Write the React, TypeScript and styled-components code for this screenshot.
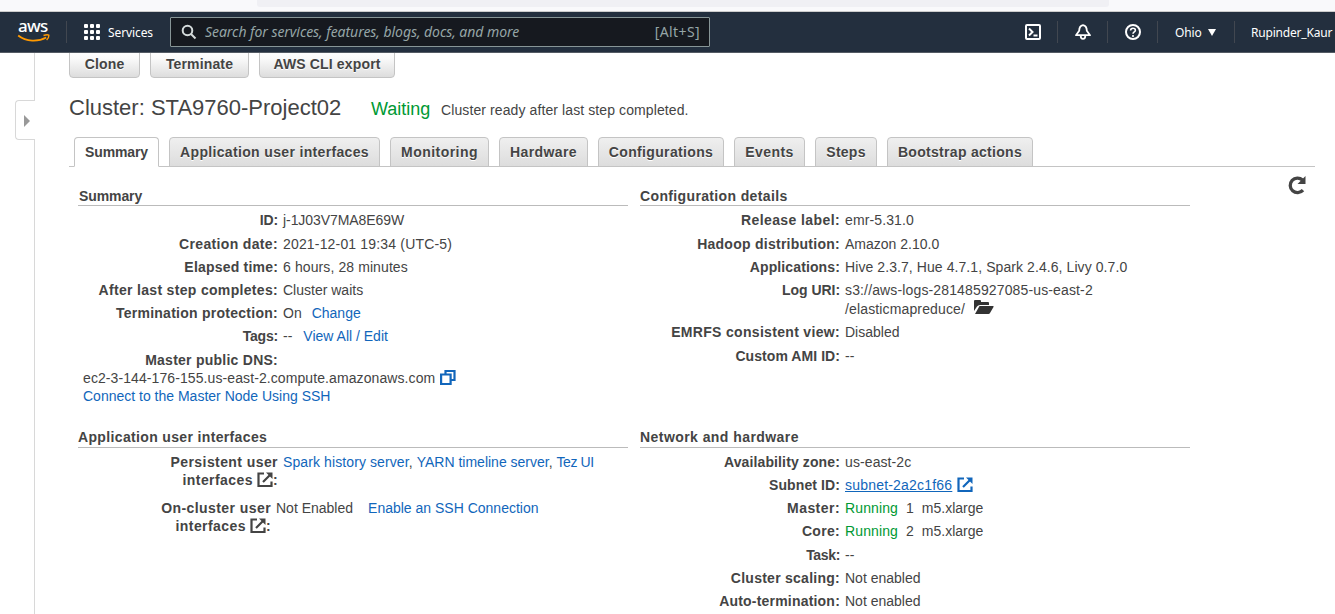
import React from "react";
import styled, { createGlobalStyle } from "styled-components";

const GlobalStyle = createGlobalStyle`
  * { box-sizing: border-box; }
  body { margin: 0; background: #fff; overflow: hidden; }
`;

const Page = styled.div`
  display: flex;
  flex-direction: column;
  width: 1335px;
  height: 614px;
  overflow: hidden;
  background: #fff;
  color: #444;
  font: 14px/18px "Liberation Sans", Arial, sans-serif;
`;

const BrowserStrip = styled.div`
  flex: none;
  height: 12px;
  background: #f9f9fb;
  border-bottom: 1px solid #cccccc;
  padding-left: 257px;
`;

const AddressBar = styled.div`
  width: 852px;
  height: 7px;
  border-radius: 0 0 3px 3px;
  background: #f0f0f4;
`;

const Nav = styled.header`
  flex: none;
  display: flex;
  align-items: center;
  height: 41px;
  background: #232f3e;
  border-bottom: 1px solid #545b64;
  color: #fff;
  font-family: "Noto Sans", sans-serif;
  font-size: 12px;
  white-space: nowrap;
`;

const Logo = styled.div`
  flex: none;
  display: flex;
  flex-direction: column;
  width: 34px;
  margin-left: 17px;
  padding-bottom: 4px;
`;

const LogoText = styled.span`
  height: 17px;
  padding-left: 1px;
  font-size: 17px;
  font-weight: 500;
  line-height: 18px;
  letter-spacing: -0.7px;
`;

const Smile = styled.svg`
  width: 34px;
  height: 9px;
`;

const Divider = styled.span<{ $left: number; $right: number }>`
  flex: none;
  width: 1px;
  height: 22px;
  margin-left: ${(p) => p.$left}px;
  margin-right: ${(p) => p.$right}px;
  background: #414750;
`;

const ServicesGrid = styled.div`
  flex: none;
  display: grid;
  grid-template-columns: repeat(3, 4px);
  grid-auto-rows: 4px;
  gap: 2px;
  span { background: #fff; border-radius: 1px; }
`;

const NavText = styled.span<{ $left: number; $width: number; $spacing?: number }>`
  flex: none;
  margin-left: ${(p) => p.$left}px;
  padding-top: 2px;
  width: ${(p) => p.$width}px;
  letter-spacing: ${(p) => p.$spacing ?? 0}px;
`;

const Search = styled.div`
  flex: none;
  display: flex;
  align-items: center;
  width: 540px;
  height: 30px;
  margin-left: 17px;
  padding: 0 9px 0 10px;
  border: 1px solid #879596;
  border-radius: 1px;
  background: #16191f;
  color: #95a5a6;
  font-size: 14px;
`;

const Placeholder = styled.em`
  flex: 1;
  margin-left: 8px;
  letter-spacing: -0.05px;
`;

const Shortcut = styled.span`
  letter-spacing: 0.4px;
`;

const NavIcon = styled.svg<{ $left?: number }>`
  flex: none;
  width: 16px;
  height: 16px;
  margin-left: ${(p) => p.$left ?? 0}px;
`;

const Caret = styled.span`
  flex: none;
  border: 4px solid transparent;
  border-top: 7px solid #fff;
  border-bottom: 0;
`;

const Body = styled.div`
  flex: 1;
  display: flex;
  min-height: 0;
`;

const Rail = styled.aside`
  flex: none;
  width: 35px;
  display: flex;
  flex-direction: column;
  align-items: flex-end;
`;

const RailLine = styled.div<{ $height?: number }>`
  width: 1px;
  background: #d8d8d8;
  ${(p) => (p.$height ? `flex: none; height: ${p.$height}px;` : "flex: 1;")}
`;

const Handle = styled.div`
  flex: none;
  width: 20px;
  height: 40px;
  display: flex;
  align-items: center;
  padding: 1px 0 0 8px;
  border: 1px solid #d8d8d8;
  border-right: 0;
  border-radius: 4px 0 0 4px;
`;

const HandleArrow = styled.span`
  border: 6px solid transparent;
  border-left: 6px solid #999;
  border-right: 0;
`;

const Main = styled.main`
  display: flex;
  flex-direction: column;
  width: 1246px;
  margin-left: 34px;
`;

const Actions = styled.div`
  flex: none;
  display: flex;
  gap: 10px;
  height: 25px;
  align-items: flex-end;
  overflow: hidden;
`;

const Button = styled.button<{ $width: number }>`
  flex: none;
  width: ${(p) => p.$width}px;
  height: 29px;
  padding: 0;
  border: 1px solid #c4c4c4;
  border-radius: 4px;
  background: linear-gradient(#fff, #fafafa 30%, #dddddd);
  color: #444;
  font: bold 14px/26px "Liberation Sans", Arial, sans-serif;
  letter-spacing: 0.15px;
  text-shadow: 0 1px #fff;
`;

const TitleRow = styled.div`
  flex: none;
  display: flex;
  align-items: baseline;
  height: 59px;
  padding-top: 18px;
  white-space: nowrap;
`;

const Title = styled.h1`
  margin: 0;
  width: 302px;
  font-size: 22px;
  line-height: 24px;
  font-weight: normal;
`;

const State = styled.span`
  width: 70px;
  color: #093;
  font-size: 18px;
`;

const Spaced = styled.span<{ $by: number }>`
  letter-spacing: ${(p) => p.$by}px;
`;

const Tabs = styled.div`
  flex: none;
  display: flex;
  gap: 10px;
  height: 30px;
  padding-left: 5px;
  border-bottom: 1px solid #c4c4c4;
`;

const Tab = styled.div<{ $width: number; $spacing: number; $active?: boolean }>`
  flex: none;
  width: ${(p) => p.$width}px;
  height: 30px;
  border: 1px solid #c4c4c4;
  border-bottom-color: ${(p) => (p.$active ? "#fff" : "#c4c4c4")};
  border-radius: 4px 4px 0 0;
  background: ${(p) => (p.$active ? "#fff" : "linear-gradient(#efefef, #dddddd)")};
  font-weight: bold;
  line-height: 28px;
  letter-spacing: ${(p) => p.$spacing}px;
  text-align: center;
  text-shadow: 0 1px #fff;
  white-space: nowrap;
`;

const Content = styled.div`
  flex: 1;
  display: flex;
  padding: 20px 0 0 9px;
`;

const Column = styled.div`
  flex: none;
  width: 550px;
  margin-right: 12px;
`;

const Section = styled.section<{ $height?: number }>`
  height: ${(p) => (p.$height ? `${p.$height}px` : "auto")};
`;

const SectionTitle = styled.h2<{ $indent?: number; $height?: number; $gap?: number; $spacing?: number }>`
  margin: 0 0 ${(p) => p.$gap ?? 5.4}px;
  height: ${(p) => p.$height ?? 19}px;
  padding-left: ${(p) => p.$indent ?? 0}px;
  border-bottom: 1px solid #bbb;
  font-size: 14px;
  line-height: 18px;
  letter-spacing: ${(p) => p.$spacing ?? 0.36}px;
`;

const Row = styled.div<{ $gap?: number }>`
  display: flex;
  gap: 5px;
  margin-bottom: ${(p) => p.$gap ?? 5.2}px;
  white-space: nowrap;
`;

const Label = styled.div<{ $width?: number; $spacing?: number }>`
  flex: none;
  width: ${(p) => p.$width ?? 200}px;
  text-align: right;
  font-weight: bold;
  letter-spacing: ${(p) => p.$spacing ?? 0.2}px;
`;

const Value = styled.div<{ $line?: number; $spacing?: number }>`
  line-height: ${(p) => p.$line ?? 18}px;
  letter-spacing: ${(p) => p.$spacing ?? 0}px;
`;

const DnsValue = styled.div`
  padding-left: 5px;
  white-space: nowrap;
`;

const Link = styled.a<{ $left?: number; $underline?: boolean }>`
  margin-left: ${(p) => p.$left ?? 0}px;
  color: #1166bb;
  text-decoration: ${(p) => (p.$underline ? "underline" : "none")};
`;

const Running = styled.span`
  color: #093;
  margin-right: 8px;
  letter-spacing: 0.12px;
`;

const Count = styled.span`
  margin-right: 8px;
`;

const Glyph = styled.svg<{ $w: number; $h: number; $left?: number; $raise?: number }>`
  width: ${(p) => p.$w}px;
  height: ${(p) => p.$h}px;
  margin: -4px 0 -4px ${(p) => p.$left ?? 0}px;
  vertical-align: ${(p) => p.$raise ?? 1}px;
`;

const Refresh = styled.svg`
  flex: none;
  width: 20px;
  height: 20px;
  margin: -12px 0 0 85px;
`;

const External = ({ left = 5, raise = 1 }: { left?: number; raise?: number }) => (
  <Glyph $w={16} $h={16} $left={left} $raise={raise} viewBox="0 0 16 16" fill="none" stroke="currentColor" strokeWidth="2.200">
    <path d="M7 1.500H1.500V14H14.500V9.500M6 10 13 3" />
    <path d="M9 .5h6.500V7z" fill="currentColor" stroke="none" />
  </Glyph>
);

const tabs: [string, number, number][] = [
  ["Summary", 85, -0.1],
  ["Application user interfaces", 211, 0.34],
  ["Monitoring", 99, 0.45],
  ["Hardware", 89, 0.4],
  ["Configurations", 126, 0.35],
  ["Events", 71, 0.4],
  ["Steps", 62, 0.25],
  ["Bootstrap actions", 146, 0.3],
];

type FieldProps = { label: string; tracking?: number; spacing?: number; children: React.ReactNode };

const Field = ({ label, tracking, spacing, children }: FieldProps) => (
  <Row>
    <Label $spacing={tracking}>{label}:</Label>
    <Value $spacing={spacing}>{children}</Value>
  </Row>
);

export default function App() {
  return (
    <Page>
      <GlobalStyle />
      <BrowserStrip><AddressBar /></BrowserStrip>
      <Nav>
        <Logo>
          <LogoText>aws</LogoText>
          <Smile viewBox="0 0 34 9" fill="none" stroke="#f90">
            <path d="M1.200 1.500c8 6.500 20 6.500 28 2" strokeWidth="1.800" />
            <path d="M26.500 1.500c2.500-.9 4.500-.9 5.300-.4.2 1.800-.6 3.500-2.200 4.900" strokeWidth="1.400" />
          </Smile>
        </Logo>
        <Divider $left={15} $right={17} />
        <ServicesGrid>{Array.from({ length: 9 }, (_, i) => <span key={i} />)}</ServicesGrid>
        <NavText $left={8} $width={45} $spacing={-0.1}>Services</NavText>
        <Search>
          <NavIcon viewBox="0 0 16 16" fill="none" stroke="#d5dbdb" strokeWidth="2">
            <circle cx="6.500" cy="6.500" r="4.800" /><path d="m10 10 4.500 4.500" />
          </NavIcon>
          <Placeholder>Search for services, features, blogs, docs, and more</Placeholder>
          <Shortcut>[Alt+S]</Shortcut>
        </Search>
        <NavIcon $left={315} viewBox="0 0 16 16" fill="none" stroke="#fff" strokeWidth="2">
          <rect x="1" y="1" width="14" height="14" rx="1" /><path d="m4 4.500 3.500 3.500L4 11.500M8.500 11.500h4" />
        </NavIcon>
        <Divider $left={16} $right={17} />
        <NavIcon viewBox="0 0 16 16" fill="none" stroke="#fff" strokeWidth="1.800" strokeLinejoin="round">
          <path d="M8 1.200C5 1.800 4.200 4 4.200 6.800L1 11.200h14L11.800 6.800C11.800 4 11 1.800 8 1.200Z" />
          <path d="M5.700 11.500c0 4.600 4.600 4.600 4.600 0" />
        </NavIcon>
        <Divider $left={16} $right={17} />
        <NavIcon viewBox="0 0 16 16" fill="none" stroke="#fff" strokeWidth="2">
          <circle cx="8" cy="8" r="7" />
          <path d="M5.600 6.500C5.600 3.300 10.400 3.600 10.400 6.200 10.400 8 8 7.800 8 9.800M8 11v2" strokeWidth="1.600" />
        </NavIcon>
        <Divider $left={16} $right={17} />
        <NavText $left={0} $width={33} $spacing={-0.1}>Ohio</NavText>
        <Caret />
        <Divider $left={18} $right={17} />
        <NavText $left={-1} $width={84} $spacing={-0.2}>Rupinder_Kaur</NavText>
      </Nav>
      <Body>
        <Rail>
          <RailLine $height={47} />
          <Handle><HandleArrow /></Handle>
          <RailLine />
        </Rail>
        <Main>
          <Actions>
            <Button $width={71}>Clone</Button>
            <Button $width={99}>Terminate</Button>
            <Button $width={136}>AWS CLI export</Button>
          </Actions>
          <TitleRow>
            <Title>Cluster: STA9760-Project02</Title>
            <State>Waiting</State>
            <Spaced $by={0.1}>Cluster ready after last step completed.</Spaced>
          </TitleRow>
          <Tabs>
            {tabs.map(([name, width, spacing], i) => (
              <Tab key={name} $width={width} $spacing={spacing} $active={i === 0}>{name}</Tab>
            ))}
          </Tabs>
          <Content>
            <Column>
              <Section $height={241}>
                <SectionTitle $indent={1} $spacing={-0.1}>Summary</SectionTitle>
                <Field label="ID" tracking={-0.1} spacing={-0.07}>j-1J03V7MA8E69W</Field>
                <Field label="Creation date" tracking={0.34} spacing={0.17}>2021-12-01 19:34 (UTC-5)</Field>
                <Field label="Elapsed time" spacing={0.1}>6 hours, 28 minutes</Field>
                <Field label="After last step completes" tracking={0.32}>Cluster waits</Field>
                <Field label="Termination protection" tracking={0.26}>On<Link $left={10}>Change</Link></Field>
                <Field label="Tags" tracking={-0.2}>--<Link $left={11}>View All / Edit</Link></Field>
                <Row $gap={0}><Label $spacing={0.25}>Master public DNS:</Label></Row>
                <DnsValue>
                  <Spaced $by={0.09}>ec2-3-144-176-155.us-east-2.compute.amazonaws.com</Spaced>
                  <Glyph $w={16} $h={16} $left={5} $raise={2} viewBox="0 0 16 16" fill="none" stroke="#1166bb" strokeWidth="2.200">
                    <path d="M1.100 5.500h9.500V15H1.100zM5.500 5.500V2h9v9h-4" />
                  </Glyph>
                </DnsValue>
                <DnsValue><Link>Connect to the Master Node Using SSH</Link></DnsValue>
              </Section>
              <Section>
                <SectionTitle $height={20} $gap={4.8} $spacing={0.35}>Application user interfaces</SectionTitle>
                <Row $gap={10}>
                  <Label $spacing={0.42}>Persistent user<br />interfaces<External left={4} />:</Label>
                  <Value><Spaced $by={0.1}><Link>Spark history server</Link>, </Spaced><Link>YARN timeline server</Link>, <Spaced $by={-0.4}><Link>Tez UI</Link></Spaced></Value>
                </Row>
                <Row>
                  <Label $width={193} $spacing={0.42}>On-cluster user<br />interfaces<External left={4} />:</Label>
                  <Value>Not Enabled<Link $left={15}>Enable an SSH Connection</Link></Value>
                </Row>
              </Section>
            </Column>
            <Column>
              <Section $height={241}>
                <SectionTitle>Configuration details</SectionTitle>
                <Field label="Release label" tracking={0.4} spacing={0.12}>emr-5.31.0</Field>
                <Field label="Hadoop distribution" tracking={0.26}>Amazon 2.10.0</Field>
                <Field label="Applications" tracking={0.12} spacing={0.08}>Hive 2.3.7, Hue 4.7.1, Spark 2.4.6, Livy 0.7.0</Field>
                <Row>
                  <Label $spacing={-0.05}>Log URI:</Label>
                  <Value $line={18.6} $spacing={0.14}>
                    s3://aws-logs-281485927085-us-east-2<br />/elasticmapreduce/
                    <Glyph $w={20} $h={16} $left={9} $raise={3} viewBox="0 0 20 16" fill="#333">
                      <path d="M0 12V2q0-1 1-1h5q1 0 1 1v1h7q1 0 1 1v2H6q-2 0-3 1.500zM5.500 7H19q1 0 .5 1l-3.500 6q-.5 1-1.500 1H1z" />
                    </Glyph>
                  </Value>
                </Row>
                <Field label="EMRFS consistent view" tracking={0.32}>Disabled</Field>
                <Field label="Custom AMI ID" tracking={0.06}>--</Field>
              </Section>
              <Section>
                <SectionTitle $height={20} $gap={4.8} $spacing={0.44}>Network and hardware</SectionTitle>
                <Field label="Availability zone" tracking={0.12} spacing={0.1}>us-east-2c</Field>
                <Field label="Subnet ID" tracking={0.1}><Spaced $by={0.2}><Link $underline>subnet-2a2c1f66</Link></Spaced><Link><External /></Link></Field>
                <Field label="Master" tracking={0.45}><Running>Running</Running><Count>1</Count>m5.xlarge</Field>
                <Field label="Core" tracking={0.3}><Running>Running</Running><Count>2</Count>m5.xlarge</Field>
                <Field label="Task" tracking={-0.35}>--</Field>
                <Field label="Cluster scaling" tracking={0.26}>Not enabled</Field>
                <Field label="Auto-termination">Not enabled</Field>
              </Section>
            </Column>
            <Refresh viewBox="0 0 20 20" fill="none" stroke="#444" strokeWidth="3.300">
              <path d="M16 15.200A7.300 7.300 0 1 1 15.500 5" /><path d="M18.500 1v8h-8z" fill="#444" stroke="none" />
            </Refresh>
          </Content>
        </Main>
      </Body>
    </Page>
  );
}
